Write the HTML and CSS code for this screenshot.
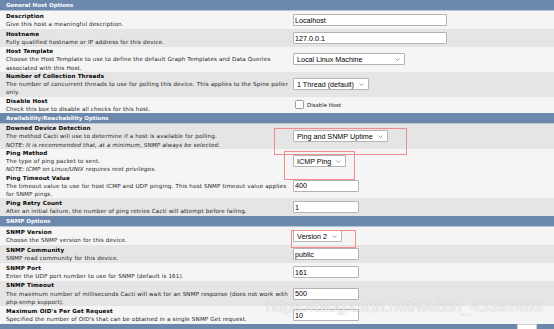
FILE: index.html
```html
<!DOCTYPE html>
<html>
<head>
<meta charset="utf-8">
<link rel="stylesheet" href="styles.css">
</head>
<body>
<div class="page">
  <div class="form">
    <div class="hdr">General Host Options</div>

    <div class="row light">
      <div class="lbl"><span class="title">Description</span><span class="desc">Give this host a meaningful description.</span></div>
      <div class="ctl"><input class="field field-wide" type="text" value="Localhost"></div>
    </div>
    <div class="row dark">
      <div class="lbl"><span class="title">Hostname</span><span class="desc">Fully qualified hostname or IP address for this device.</span></div>
      <div class="ctl"><input class="field field-wide" type="text" value="127.0.0.1"></div>
    </div>
    <div class="row light">
      <div class="lbl"><span class="title">Host Template</span><span class="desc">Choose the Host Template to use to define the default Graph Templates and Data Queries associated with this Host.</span></div>
      <div class="ctl"><span class="select select-wide">Local Linux Machine<svg class="chev" viewBox="0 0 5 3"><polyline points="0.5,0.5 2.5,2.5 4.5,0.5"/></svg></span></div>
    </div>
    <div class="row dark">
      <div class="lbl"><span class="title">Number of Collection Threads</span><span class="desc">The number of concurrent threads to use for polling this device. This applies to the Spine poller only.</span></div>
      <div class="ctl"><span class="select">1 Thread (default)<svg class="chev" viewBox="0 0 5 3"><polyline points="0.5,0.5 2.5,2.5 4.5,0.5"/></svg></span></div>
    </div>
    <div class="row light">
      <div class="lbl"><span class="title">Disable Host</span><span class="desc">Check this box to disable all checks for this host.</span></div>
      <div class="ctl"><label class="check"><span class="box"></span><span class="check-text">Disable Host</span></label></div>
    </div>

    <div class="hdr">Availability/Reachability Options</div>

    <div class="row dark">
      <div class="lbl"><span class="title">Downed Device Detection</span><span class="desc">The method Cacti will use to determine if a host is available for polling.</span><span class="desc note">NOTE: It is recommended that, at a minimum, SNMP always be selected.</span></div>
      <div class="ctl"><span class="select">Ping and SNMP Uptime<svg class="chev" viewBox="0 0 5 3"><polyline points="0.5,0.5 2.5,2.5 4.5,0.5"/></svg></span></div>
    </div>
    <div class="row light">
      <div class="lbl"><span class="title">Ping Method</span><span class="desc">The type of ping packet to sent.</span><span class="desc note">NOTE: ICMP on Linux/UNIX requires root privileges.</span></div>
      <div class="ctl"><span class="select">ICMP Ping<svg class="chev" viewBox="0 0 5 3"><polyline points="0.5,0.5 2.5,2.5 4.5,0.5"/></svg></span></div>
    </div>
    <div class="row light">
      <div class="lbl"><span class="title">Ping Timeout Value</span><span class="desc">The timeout value to use for host ICMP and UDP pinging. This host SNMP timeout value applies for SNMP pings.</span></div>
      <div class="ctl"><input class="field field-short" type="text" value="400"></div>
    </div>
    <div class="row dark">
      <div class="lbl"><span class="title">Ping Retry Count</span><span class="desc">After an initial failure, the number of ping retries Cacti will attempt before failing.</span></div>
      <div class="ctl"><input class="field field-short" type="text" value="1"></div>
    </div>

    <div class="hdr">SNMP Options</div>

    <div class="row light">
      <div class="lbl"><span class="title">SNMP Version</span><span class="desc">Choose the SNMP version for this device.</span></div>
      <div class="ctl"><span class="select">Version 2<svg class="chev" viewBox="0 0 5 3"><polyline points="0.5,0.5 2.5,2.5 4.5,0.5"/></svg></span></div>
    </div>
    <div class="row dark">
      <div class="lbl"><span class="title">SNMP Community</span><span class="desc">SNMP read community for this device.</span></div>
      <div class="ctl"><input class="field field-short" type="text" value="public"></div>
    </div>
    <div class="row light">
      <div class="lbl"><span class="title">SNMP Port</span><span class="desc">Enter the UDP port number to use for SNMP (default is 161).</span></div>
      <div class="ctl"><input class="field field-short" type="text" value="161"></div>
    </div>
    <div class="row dark">
      <div class="lbl"><span class="title">SNMP Timeout</span><span class="desc">The maximum number of milliseconds Cacti will wait for an SNMP response (does not work with php-snmp support).</span></div>
      <div class="ctl"><input class="field field-short" type="text" value="500"></div>
    </div>
    <div class="row light">
      <div class="lbl"><span class="title">Maximum OID's Per Get Request</span><span class="desc">Specified the number of OID's that can be obtained in a single SNMP Get request.</span></div>
      <div class="ctl"><input class="field field-short" type="text" value="10"></div>
    </div>

    <div class="hdr hdr-last"><span class="hdr-btn"></span></div>
  </div>

  <div class="mark mark-1"></div>
  <div class="mark mark-2"></div>
  <div class="mark mark-3"></div>
  <div class="watermark">https://blog.csdn.net/weixin_43392489</div>
</div>
</body>
</html>
```

FILE: styles.css
```css
html, body {
  margin: 0;
  padding: 0;
  background: #ffffff;
}

.page {
  position: relative;
  width: 554px;
  height: 329px;
  overflow: hidden;
  font-family: "DejaVu Sans", Verdana, sans-serif;
  font-size: 5.6px;
  color: #111;
}

.form {
  display: flex;
  flex-direction: column;
}

.hdr {
  height: 10px;
  line-height: 10px;
  padding-left: 6px;
  background: #6d88ad;
  border-bottom: 1px solid #b9c6d8;
  color: #ffffff;
  font-weight: bold;
  font-size: 5.5px;
  letter-spacing: 0.05px;
  display: flex;
  align-items: center;
}

.hdr-last {
  justify-content: flex-end;
  align-items: flex-start;
  padding-right: 17px;
}

.hdr-btn {
  width: 20px;
  height: 8px;
  background: #ffffff;
  border: 1px solid #cfcfcf;
  box-sizing: border-box;
}

.row {
  display: grid;
  grid-template-columns: 289px 1fr;
  align-items: center;
}

.light { background: #f5f5f5; }
.dark { background: #e5e5e5; }

.lbl {
  padding: 0 0 0 6px;
  line-height: 8.25px;
  letter-spacing: 0.15px;
  display: flex;
  flex-direction: column;
}

.title {
  font-weight: bold;
  color: #000;
}

.desc {
  color: #222;
}

.note {
  font-style: italic;
}

.ctl {
  padding: 3px 0 3px 4px;
  display: flex;
  align-items: center;
}

.field {
  box-sizing: border-box;
  height: 12px;
  margin: 0;
  padding: 0 1px;
  border: 1px solid #b4b4b4;
  border-radius: 1px;
  background: #fff;
  font-family: "Liberation Sans", Arial, sans-serif;
  font-size: 7.2px;
  color: #000;
  outline: none;
}

.field-wide { width: 154px; }
.field-short { width: 66px; }

.select {
  box-sizing: border-box;
  height: 12px;
  display: inline-flex;
  align-items: center;
  gap: 5px;
  padding: 0 4px 0 3px;
  border: 1px solid #b4b4b4;
  border-radius: 1px;
  background: #fff;
  font-family: "Liberation Sans", Arial, sans-serif;
  font-size: 7.2px;
  color: #000;
  white-space: nowrap;
}

.select-wide {
  width: 112px;
  justify-content: space-between;
}

.chev {
  width: 5px;
  height: 3px;
  fill: none;
  stroke: #8a8a8a;
  stroke-width: 0.8;
}

.check {
  display: inline-flex;
  align-items: center;
  gap: 3px;
  padding-left: 2px;
}

.box {
  box-sizing: border-box;
  width: 9px;
  height: 9px;
  border: 1px solid #9a9a9a;
  border-radius: 1.5px;
  background: #fff;
}

.check-text {
  font-size: 5.4px;
  color: #222;
}

.mark {
  position: absolute;
  box-sizing: border-box;
  border: 1px solid #f08c8c;
}

.mark-1 { left: 274px; top: 128px; width: 133px; height: 27px; }
.mark-2 { left: 284px; top: 151px; width: 71px; height: 29px; }
.mark-3 { left: 291px; top: 230px; width: 65px; height: 18px; }

.watermark {
  position: absolute;
  left: 266px;
  top: 297px;
  font-family: "Liberation Sans", Arial, sans-serif;
  font-size: 16.3px;
  color: rgba(255, 255, 255, 0.8);
  text-shadow: 0 0 1px rgba(90, 90, 90, 0.45);
  white-space: nowrap;
}
```
